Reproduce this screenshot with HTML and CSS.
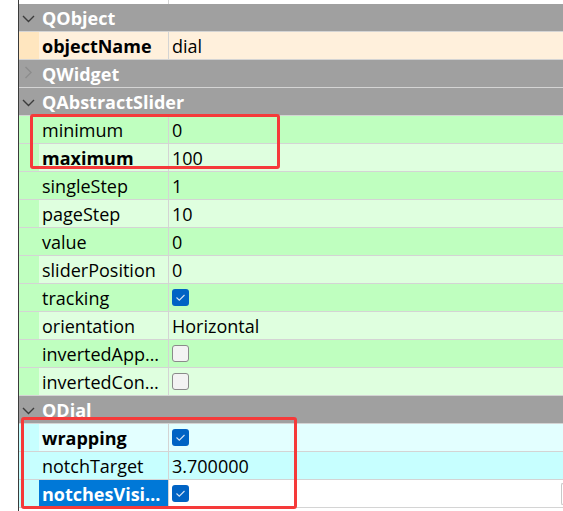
FILE: index.html
```html
<!DOCTYPE html>
<html lang="en">
<head>
    <meta charset="UTF-8">
    <meta name="viewport" content="width=device-width, initial-scale=1.0">
    <title>Property Editor</title>
    <link rel="stylesheet" href="styles.css">
</head>
<body>
    <div class="editor">
        <div class="tree">
            <div class="stub"><span class="name"></span><span class="value"></span></div>

            <div class="group">
                <svg class="arrow" width="14" height="28" viewBox="0 0 14 28"><path d="M2 13 L7.5 18.5 L13 13" fill="none" stroke="#3c3c3c" stroke-width="1.4"/></svg>
                <span class="title">QObject</span>
            </div>
            <div class="prop cream alt">
                <span class="indent"></span><span class="name bold">objectName</span><span class="value">dial</span>
            </div>

            <div class="group">
                <svg class="arrow" width="14" height="28" viewBox="0 0 14 28"><path d="M4.5 8 L10 13.5 L4.5 19" fill="none" stroke="#8c8c8c" stroke-width="1.4"/></svg>
                <span class="title">QWidget</span>
            </div>

            <div class="group">
                <svg class="arrow" width="14" height="28" viewBox="0 0 14 28"><path d="M2 13 L7.5 18.5 L13 13" fill="none" stroke="#3c3c3c" stroke-width="1.4"/></svg>
                <span class="title">QAbstractSlider</span>
            </div>
            <div class="prop green">
                <span class="indent"></span><span class="name">minimum</span><span class="value">0</span>
            </div>
            <div class="prop green alt">
                <span class="indent"></span><span class="name bold">maximum</span><span class="value">100</span>
            </div>
            <div class="prop green">
                <span class="indent"></span><span class="name">singleStep</span><span class="value">1</span>
            </div>
            <div class="prop green alt">
                <span class="indent"></span><span class="name">pageStep</span><span class="value">10</span>
            </div>
            <div class="prop green">
                <span class="indent"></span><span class="name">value</span><span class="value">0</span>
            </div>
            <div class="prop green alt">
                <span class="indent"></span><span class="name">sliderPosition</span><span class="value">0</span>
            </div>
            <div class="prop green">
                <span class="indent"></span><span class="name">tracking</span>
                <span class="value"><span class="check on"><svg width="17" height="17" viewBox="0 0 17 17"><path d="M4.5 8.5 L7.3 11.2 L12.5 6" fill="none" stroke="#d6e4f4" stroke-width="1.1"/></svg></span></span>
            </div>
            <div class="prop green alt">
                <span class="indent"></span><span class="name">orientation</span><span class="value">Horizontal</span>
            </div>
            <div class="prop green">
                <span class="indent"></span><span class="name">invertedApp…</span>
                <span class="value"><span class="check"></span></span>
            </div>
            <div class="prop green alt">
                <span class="indent"></span><span class="name">invertedCon…</span>
                <span class="value"><span class="check"></span></span>
            </div>

            <div class="group">
                <svg class="arrow" width="14" height="28" viewBox="0 0 14 28"><path d="M2 13 L7.5 18.5 L13 13" fill="none" stroke="#3c3c3c" stroke-width="1.4"/></svg>
                <span class="title">QDial</span>
            </div>
            <div class="prop cyan alt">
                <span class="indent"></span><span class="name bold">wrapping</span>
                <span class="value"><span class="check on"><svg width="17" height="17" viewBox="0 0 17 17"><path d="M4.5 8.5 L7.3 11.2 L12.5 6" fill="none" stroke="#d6e4f4" stroke-width="1.1"/></svg></span></span>
            </div>
            <div class="prop cyan">
                <span class="indent"></span><span class="name">notchTarget</span><span class="value">3.700000</span>
            </div>
            <div class="prop cyan alt selected">
                <span class="indent"></span><span class="name bold">notchesVisi…</span>
                <span class="value"><span class="check on"><svg width="17" height="17" viewBox="0 0 17 17"><path d="M4.5 8.5 L7.3 11.2 L12.5 6" fill="none" stroke="#d6e4f4" stroke-width="1.1"/></svg></span><span class="edge"></span></span>
            </div>
        </div>

        <div class="mark mark-slider"></div>
        <div class="mark mark-dial"></div>
    </div>
</body>
</html>
```

FILE: styles.css
```css
*{
    margin: 0;
    padding: 0;
    box-sizing: border-box;
}
body{
    background: #fff;
    font-family: "Open Sans", "Noto Sans", sans-serif;
    font-size: 18px;
    color: #000;
}
.editor{
    position: relative;
    width: 563px;
    height: 511px;
    padding-left: 18px;
    overflow: hidden;
}
.tree{
    height: 100%;
    border-left: 1px solid #3a3a3a;
}
.stub{
    display: grid;
    grid-template-columns: 150px 1fr;
    height: 4px;
}
.stub .name{
    border-right: 1px solid #d4d4d4;
}
.group{
    display: flex;
    align-items: flex-start;
    height: 28px;
    padding-left: 2px;
    background: #a0a0a0;
    border-bottom: 1px solid #d4d4d4;
    color: #fff;
    font-weight: 700;
}
.title{
    line-height: 25px;
    padding-top: 2px;
}
.arrow{
    margin-right: 7px;
    flex: none;
    margin-top: -1px;
}
.prop{
    display: grid;
    grid-template-columns: 20px 130px 1fr;
    height: 28px;
    line-height: 25px;
    border-bottom: 1px solid #d4d4d4;
}
.name{
    padding: 2px 0 0 3px;
    border-right: 1px solid #d4d4d4;
    white-space: nowrap;
    overflow: hidden;
}
.bold{
    font-weight: 700;
}
.value{
    display: flex;
    align-items: center;
    padding: 2px 0 0 3px;
    white-space: nowrap;
}
.cream{ background: #ffe6bf; }
.cream.alt .name, .cream.alt .value{ background: #fff0dc; }
.green{ background: #bfffbf; }
.green.alt .name, .green.alt .value{ background: #dfffdf; }
.cyan{ background: #c7ffff; }
.cyan.alt .name, .cyan.alt .value{ background: #e3ffff; }

.prop.selected .name{
    background: #0078d7;
    color: #fff;
}
.prop.selected .value{
    background: #fff;
}
.check{
    display: block;
    width: 17px;
    height: 17px;
    margin-top: -2px;
    border: 1px solid #8a8a8a;
    border-radius: 3px;
    background: #f3f3f3;
}
.check.on{
    border: none;
    background: #0063c4;
}
.check svg{
    display: block;
}
.edge{
    margin-left: auto;
    margin-top: -2px;
    width: 2px;
    height: 22px;
    border: 1px solid #c8c8c8;
    border-right: none;
    border-radius: 3px 0 0 3px;
    background: #fff;
}
.mark{
    position: absolute;
    border: 3px solid #f53a3a;
    border-radius: 3px;
}
.mark-slider{
    left: 30px;
    top: 114px;
    width: 250px;
    height: 55px;
}
.mark-dial{
    left: 21px;
    top: 417px;
    width: 276px;
    height: 92px;
}
```
